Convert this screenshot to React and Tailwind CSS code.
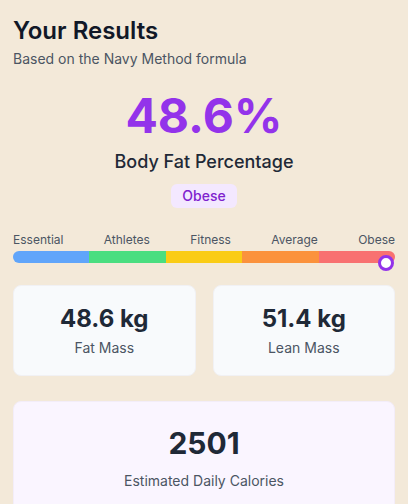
const segments = [
  { label: 'Essential', color: 'bg-[#60a5fa]' },
  { label: 'Athletes', color: 'bg-[#4ade80]' },
  { label: 'Fitness', color: 'bg-[#facc15]' },
  { label: 'Average', color: 'bg-[#fb923c]' },
  { label: 'Obese', color: 'bg-[#f87171]' },
]

function StatCard({ value, label }) {
  return (
    <div className="flex-1 bg-[#f8fafc] border border-[#f1f1f4] rounded-lg flex flex-col items-center pt-[17px] pb-[17px]">
      <div className="text-[24px] leading-8 font-bold text-[#1f2937]">{value}</div>
      <div className="text-[14px] leading-5 text-[#4b5563] mt-[3px]">{label}</div>
    </div>
  )
}

export default function App() {
  const bodyFat = 48.6
  // marker spot on the scale, clamped to the bar
  const markerPos = Math.min(bodyFat / 49.8, 1) * 100

  return (
    <div
      className="min-h-screen bg-[#f3e9d9] px-[13px] pt-[15px] overflow-hidden"
      style={{ fontFamily: 'Inter, "Noto Sans", sans-serif' }}
    >
      <h1 className="text-[24px] leading-8 font-semibold text-[#111827]">Your Results</h1>
      <p className="text-[14px] leading-5 text-[#4b5563] mt-[2px]">Based on the Navy Method formula</p>

      <div className="flex flex-col items-center mt-[17px]">
        <div className="text-[48px] leading-[60px] font-bold text-[#9333ea]">48.6%</div>
        <div className="text-[18px] leading-7 font-medium text-[#1f2937] mt-[2px]">Body Fat Percentage</div>
        <span className="mt-[8px] px-[11px] py-[2px] rounded-md bg-[#f3e8ff] text-[#7e22ce] text-[14px] leading-5 font-medium">
          Obese
        </span>
      </div>

      <div className="mt-[24px]">
        <div className="flex justify-between text-[12px] leading-4 text-[#4b5563]">
          {segments.map((s) => (
            <span key={s.label}>{s.label}</span>
          ))}
        </div>
        <div className="relative mt-[3px]">
          <div className="flex h-[12px] rounded-full overflow-hidden">
            {segments.map((s) => (
              <div key={s.label} className={`flex-1 ${s.color}`} />
            ))}
          </div>
          <div
            className="absolute top-[4px] w-[16px] h-[16px] -translate-x-1/2 rounded-full bg-white border-[3px] border-[#9333ea]"
            style={{ left: `${markerPos}%` }}
          />
        </div>
      </div>

      <div className="flex gap-[17px] mt-[22px]">
        <StatCard value="48.6 kg" label="Fat Mass" />
        <StatCard value="51.4 kg" label="Lean Mass" />
      </div>

      <div className="mt-[25px] bg-[#faf5ff] border border-[#f3edf9] rounded-lg flex flex-col items-center pt-[23px] pb-[24px]">
        <div className="text-[30px] leading-9 font-bold text-[#1f2937]">2501</div>
        <div className="text-[14px] leading-5 text-[#4b5563] mt-[10px]">Estimated Daily Calories</div>
      </div>
    </div>
  )
}
